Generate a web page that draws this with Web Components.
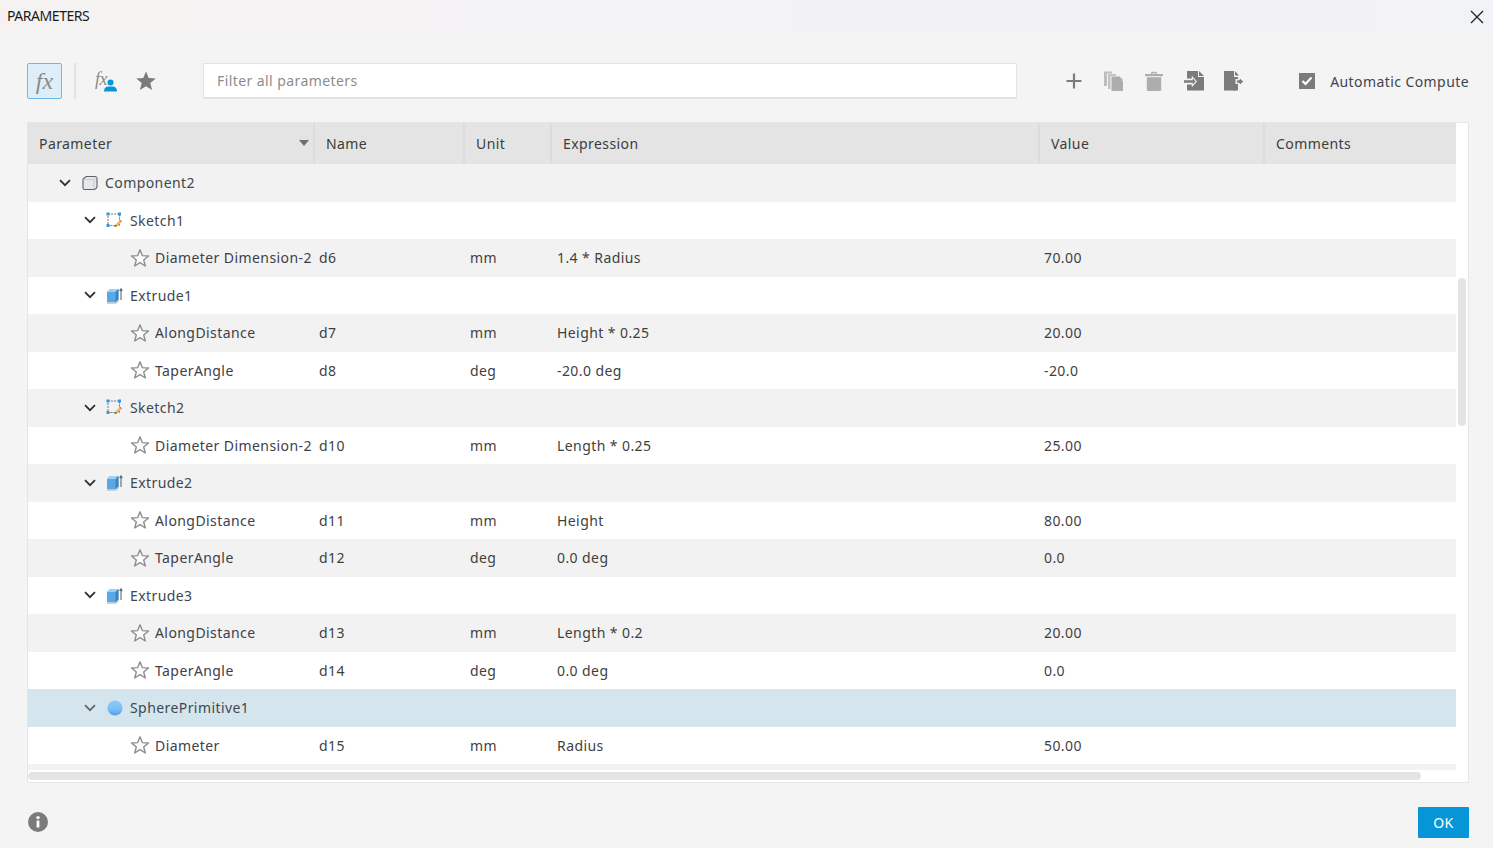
<!DOCTYPE html>
<html lang="en"><head><meta charset="utf-8"><title>Parameters</title>
<style>
html,body{margin:0;padding:0;height:100%;background:#f4f4f4;overflow:hidden}
body{font-family:"Noto Sans","Open Sans",sans-serif;font-size:14px;color:#3c3c3c}
</style></head><body>

<svg width="0" height="0" style="position:absolute" aria-hidden="true"></svg>

<param-dialog>
  <title-bar slot="title">PARAMETERS</title-bar>
  <tool-bar slot="tools"></tool-bar>
  <param-table slot="table">
    <param-row kind="section" level="0" icon="component" label="Component2"></param-row>
    <param-row kind="group" level="1" icon="sketch" label="Sketch1"></param-row>
    <param-row label="Diameter Dimension-2" name="d6" unit="mm" expr="1.4 * Radius" value="70.00"></param-row>
    <param-row kind="group" level="1" icon="extrude" label="Extrude1"></param-row>
    <param-row label="AlongDistance" name="d7" unit="mm" expr="Height * 0.25" value="20.00"></param-row>
    <param-row label="TaperAngle" name="d8" unit="deg" expr="-20.0 deg" value="-20.0"></param-row>
    <param-row kind="group" level="1" icon="sketch" label="Sketch2"></param-row>
    <param-row label="Diameter Dimension-2" name="d10" unit="mm" expr="Length * 0.25" value="25.00"></param-row>
    <param-row kind="group" level="1" icon="extrude" label="Extrude2"></param-row>
    <param-row label="AlongDistance" name="d11" unit="mm" expr="Height" value="80.00"></param-row>
    <param-row label="TaperAngle" name="d12" unit="deg" expr="0.0 deg" value="0.0"></param-row>
    <param-row kind="group" level="1" icon="extrude" label="Extrude3"></param-row>
    <param-row label="AlongDistance" name="d13" unit="mm" expr="Length * 0.2" value="20.00"></param-row>
    <param-row label="TaperAngle" name="d14" unit="deg" expr="0.0 deg" value="0.0"></param-row>
    <param-row kind="group" level="1" icon="sphere" label="SpherePrimitive1" selected></param-row>
    <param-row label="Diameter" name="d15" unit="mm" expr="Radius" value="50.00"></param-row>
    <param-row label="" name="" unit="" expr="" value=""></param-row>
  </param-table>
  <dialog-footer slot="footer"></dialog-footer>
</param-dialog>

<script>
const ICONS = {
  chevron:`<svg width="12" height="8" viewBox="0 0 12 8"><path d="M1 1.2 6 6.2 11 1.2" fill="none" stroke="currentColor" stroke-width="1.7"/></svg>`,
  star:`<svg width="20" height="20" viewBox="0 0 20 20"><path d="M10 1.8 12.3 7.6 18.5 8 13.7 12 15.3 18 10 14.7 4.7 18 6.3 12 1.5 8 7.7 7.6Z" fill="#fafafa" stroke="#8e8e8e" stroke-width="1.4" stroke-linejoin="round"/></svg>`,
  component:`<svg width="16" height="16" viewBox="0 0 16 16"><path d="M4.4 1.5H13.2Q15 1.5 15 3.3V11.6Q15 12.6 14.2 13.2L12.6 14.5H2.8Q1 14.500 1 12.700V4.600Q1 3.900 1.700 3.300Z" fill="#e6e7ea" stroke="#5f6268" stroke-width="1.100"/><path d="M1.300 4.500H11.800L14.800 1.800M11.800 4.500V14.300" fill="none" stroke="#c4c6ca" stroke-width=".8"/></svg>`,
  sketch:`<svg width="17" height="17" viewBox="0 0 17 17"><rect x="2" y="2" width="11.500" height="11.500" fill="none" stroke="#777" stroke-width="1" stroke-dasharray="2 1"/><g fill="#2d9be5"><rect x=".500" y=".500" width="3" height="3"/><rect x="12" y=".500" width="3" height="3"/><rect x=".500" y="12" width="3" height="3"/></g><path d="M8.500 15 9.300 12.700 13.500 8.500 15.200 10.200 11 14.400Z" fill="#f0b45a"/><path d="M13.500 8.500 14.300 7.700 16 9.400 15.200 10.200Z" fill="#e8534f"/><path d="M8.500 15 9.300 12.700 10.800 14.200Z" fill="#6d5a3a"/></svg>`,
  extrude:`<svg width="17" height="17" viewBox="0 0 17 17"><path d="M1 5 4 2H12.500V12.500L9.500 15.500H1Z" fill="#5aa9e6"/><path d="M1 5 4 2H12.500L9.500 5Z" fill="#9dd0f3"/><path d="M9.500 5 12.500 2V12.500L9.500 15.500Z" fill="#3d86c6"/><path d="M1 15.500H9.500L12.500 12.500V14.500L10 16.800H1Z" fill="#c4c4c4"/><path d="M15 13V2.500M13.700 4 15 1.800 16.300 4" fill="none" stroke="#666" stroke-width="1.100"/></svg>`,
  sphere:`<svg width="16" height="16" viewBox="0 0 16 16"><defs><linearGradient id="s" x1="0" y1="0" x2="0" y2="1"><stop offset="0" stop-color="#8fcdfb"/><stop offset=".6" stop-color="#77bef5"/><stop offset="1" stop-color="#4f9ede"/></linearGradient></defs><circle cx="8" cy="8" r="7.600" fill="url(#s)"/></svg>`,
  starSolid:`<svg width="22" height="22" viewBox="0 0 22 22"><path d="M11 1.500 13.700 8 20.800 8.500 15.300 13 17.100 20 11 16.200 4.900 20 6.700 13 1.200 8.500 8.300 8Z" fill="#7b7b7b"/></svg>`,
  plus:`<svg width="18" height="18" viewBox="0 0 18 18"><path d="M9 1.500V16.500M1.500 9H16.500" stroke="#7c7c7c" stroke-width="2.200"/></svg>`,
  copy:`<svg width="20" height="20" viewBox="0 0 20 20"><path d="M0 .5H8V2.500H3V15H0Z" fill="#bdbdbd"/><path d="M4 3H12V5H6.500V18H4Z" fill="#bdbdbd" opacity=".9"/><path d="M7.500 5.500H14L19 10V20H7.500Z" fill="#adadad"/><path d="M14.500 4.500 19 9H14.500Z" fill="#adadad"/></svg>`,
  trash:`<svg width="20" height="20" viewBox="0 0 20 20"><path d="M7 2.300Q7 .8 8.500 .8H11.500Q13 .8 13 2.300V3H11.700V2.200H8.300V3H7Z" fill="#adadad"/><rect x="1" y="3" width="18" height="2.200" fill="#adadad"/><path d="M2.800 6.300H17.200V18.500Q17.200 20 15.700 20H4.300Q2.800 20 2.800 18.500Z" fill="#adadad"/></svg>`,
  importDoc:`<svg width="20" height="20" viewBox="0 0 20 20"><path d="M3 0H14L14 6H20V19.500H3V13.600H7.800V16.300L13 10.500 7.800 4.800V7.600H3Z" fill="#7b7b7b"/><path d="M15 0 20 5H15Z" fill="#7b7b7b"/><path d="M0 9.200H8.800V7.300L11.500 10.500 8.800 13.600V11.800H0Z" fill="#7b7b7b"/></svg>`,
  exportDoc:`<svg width="20" height="20" viewBox="0 0 20 20"><path d="M0 0H10L10 6H14V8H11.500V19.500H0Z" fill="#7b7b7b"/><path d="M11 0 15 4.500H11Z" fill="#7b7b7b"/><path d="M11 9V7.800H15V5.300L20 10.200 15 15.300V12.800H11V20H12.500V14.200H13.500V19.500H14.500" fill="none"/><path d="M12.800 8.800H15.500V6.800L19.500 10.500 15.500 14.300V12.300H12.800Z" fill="#7b7b7b" stroke="#f4f4f4" stroke-width=".8"/><rect x="9" y="13" width="5" height="6.500" fill="#7b7b7b"/></svg>`,
  user:`<svg width="13" height="13" viewBox="0 0 13 13"><circle cx="6.500" cy="3.500" r="3" fill="#0696d7"/><path d="M0 12.500Q0 8 4 7.500H9Q13 8 13 12.500Z" fill="#0696d7"/></svg>`,
  info:`<svg width="20" height="20" viewBox="0 0 20 20"><circle cx="10" cy="10" r="10" fill="#7b7b7b"/><rect x="8.600" y="8.500" width="2.800" height="7" fill="#fff"/><circle cx="10" cy="5.600" r="1.700" fill="#fff"/></svg>`,
  close:`<svg width="14" height="14" viewBox="0 0 14 14"><path d="M1 1 13 13M13 1 1 13" stroke="#222" stroke-width="1.300" fill="none"/></svg>`
};
const COLUMNS = "287px 150px 87px 488px 225px 191px";

class Base extends HTMLElement {
  render(html){ if(!this.shadowRoot) this.attachShadow({mode:"open"}); this.shadowRoot.innerHTML = html; }
}

customElements.define("param-dialog", class extends Base {
  connectedCallback(){ this.render(`<style>
    :host{display:flex;flex-direction:column;height:848px;width:1493px;background:#f4f4f4}
  </style><slot name="title"></slot><slot name="tools"></slot><slot name="table"></slot><slot name="footer"></slot>`); }
});

customElements.define("title-bar", class extends Base {
  connectedCallback(){ this.render(`<style>
    :host{display:flex;align-items:center;justify-content:space-between;height:34px;box-sizing:border-box;padding:0 9px 3px 7px;
      background:linear-gradient(90deg,#f6f2f2,#f3f2f5 45%,#f2f3f7);color:#1a1a1a;font:14px "Noto Sans",sans-serif;letter-spacing:-.45px}
    svg{display:block;margin-top:3px}
  </style><span><slot></slot></span>${ICONS.close}`); }
});

customElements.define("tool-slot", class extends Base {
  connectedCallback(){ this.render(`<style>:host{display:flex;width:40px;height:36px;align-items:center;justify-content:center}</style><slot></slot>`); }
});

customElements.define("tool-bar", class extends Base {
  connectedCallback(){ this.render(`<style>
    :host{display:flex;align-items:center;height:88px;box-sizing:border-box;padding:29px 24px 23px 27px;color:#4a4a4a}
    .fx{box-sizing:border-box;width:35px;height:36px;border:1px solid #6bbbe6;border-radius:2px;background:#deeef8;display:flex;align-items:center;justify-content:center;
      font:italic 24px "Liberation Serif",serif;color:#8a8a8a;letter-spacing:0}
    .div{width:2px;height:36px;background:#e2e2e2;margin:0 10px 0 12px}
    .fxu{position:relative;width:22px;height:22px;font:italic 18px/18px "Liberation Serif",serif;color:#8a8a8a;letter-spacing:-.5px}
    .fxu svg{position:absolute;right:0;bottom:0}
    .search{flex:1;height:36px;box-sizing:border-box;margin:0 37px;border:1px solid #e2e2e2;border-bottom-width:2px;background:#fff;padding:0 13px;
      font:14px/33px "Noto Sans",sans-serif;letter-spacing:.42px;color:#8c8c8c}
    .check{width:16px;height:16px;background:#7b7b7b;margin-left:45px;display:flex;align-items:center;justify-content:center}
    .label{margin-left:15px;font:14px "Noto Sans",sans-serif;letter-spacing:.42px;color:#3c4650}
  </style>
  <div class="fx">fx</div><div class="div"></div>
  <tool-slot><div class="fxu">fx${ICONS.user}</div></tool-slot>
  <tool-slot>${ICONS.starSolid}</tool-slot>
  <div class="search">Filter all parameters</div>
  <tool-slot style="margin-left:0">${ICONS.plus}</tool-slot>
  <tool-slot>${ICONS.copy}</tool-slot>
  <tool-slot>${ICONS.trash}</tool-slot>
  <tool-slot>${ICONS.importDoc}</tool-slot>
  <tool-slot>${ICONS.exportDoc}</tool-slot>
  <div class="check"><svg width="12" height="10" viewBox="0 0 12 10"><path d="M1.500 5 4.500 8 10.500 1.500" fill="none" stroke="#fff" stroke-width="2.200"/></svg></div>
  <span class="label">Automatic Compute</span>`); }
});

customElements.define("param-table", class extends Base {
  connectedCallback(){
    const heads=["Parameter","Name","Unit","Expression","Value","Comments"];
    this.render(`<style>
    :host{display:block;position:relative;box-sizing:border-box;height:661px;margin:0 24px 0 27px;border:1px solid #e6e6e6;background:#fff;overflow:hidden}
    .view{width:1428px;height:647px;overflow:hidden}
    .head{display:grid;grid-template-columns:${COLUMNS};height:41px;background:#e4e4e4;position:relative}
    .head div{box-sizing:border-box;padding:0 0 0 11px;line-height:41px;border-right:2px solid #dcdcdc;letter-spacing:.42px;color:#3c3c3c;position:relative}
    .head div:last-child{border-right:0}
    .sort{position:absolute;right:4px;top:17px;width:0;height:0;border:5px solid transparent;border-top:6px solid #6f6f6f;border-bottom:0}
    .vbar{position:absolute;left:1430px;top:155px;width:8px;height:148px;border-radius:4px;background:#e4e4e4}
    .hbar{position:absolute;left:0;top:649px;width:1393px;height:8px;border-radius:4px;background:#e4e4e4}
    </style>
    <div class="view"><div class="head">${heads.map((h,i)=>`<div>${h}${i==0?'<span class="sort"></span>':''}</div>`).join("")}</div><slot></slot></div>
    <div class="vbar"></div><div class="hbar"></div>`);
  }
});

customElements.define("param-row", class extends Base {
  connectedCallback(){
    const a=n=>this.getAttribute(n)||"";
    const kind=a("kind");
    const idx=[...this.parentNode.children].indexOf(this);
    const bg=this.hasAttribute("selected")?"#d5e5ed":(idx%2==0?"#f2f2f2":"#fff");
    let first;
    if(kind){
      const ml=kind=="section"?32:57;
      first=`<span class="chev" style="margin-left:${ml - 1}px;color:${this.hasAttribute("selected")?"#666":"#2e2e2e"}">${ICONS.chevron}</span><span class="ic">${ICONS[a("icon")]}</span><span class="t">${a("label")}</span>`;
    } else if(a("label")){
      first=`<span class="star">${ICONS.star}</span><span class="t p">${a("label")}</span>`;
    } else first="";
    this.render(`<style>
    :host{display:grid;grid-template-columns:${COLUMNS};height:37.5px;background:${bg};align-items:center;letter-spacing:.42px;color:#3f3f3f}
    .f{display:flex;align-items:center;white-space:nowrap;min-width:0}
    .chev{display:flex;width:12px;justify-content:center}
    .ic{display:flex;margin-left:10px;width:17px;justify-content:center}
    .t{margin-left:7px;color:#3f4750}
    .star{display:flex;margin-left:102px}
    .t.p{margin-left:5px;color:#40404a}
    .c{padding-left:4px}
    </style><div class="f">${first}</div>
    <div class="c n">${a("name")}</div><div class="c n" style="padding-left:5px">${a("unit")}</div><div class="c" style="padding-left:5px">${a("expr")}</div><div class="c">${a("value")}</div><div></div>`);
  }
});

customElements.define("dialog-footer", class extends Base {
  connectedCallback(){ this.render(`<style>
    :host{display:flex;align-items:center;justify-content:space-between;height:65px;box-sizing:border-box;padding:23px 24px 10px 28px}
    svg{display:block}
    button{width:51px;height:31px;border:0;border-radius:1px;background:#0696d7;color:#fff;font:14px "Noto Sans",sans-serif;letter-spacing:.5px;padding:0}
  </style>${ICONS.info}<button>OK</button>`); }
});

customElements.define("dummy-none", class extends Base {});
</script>
</body></html>
